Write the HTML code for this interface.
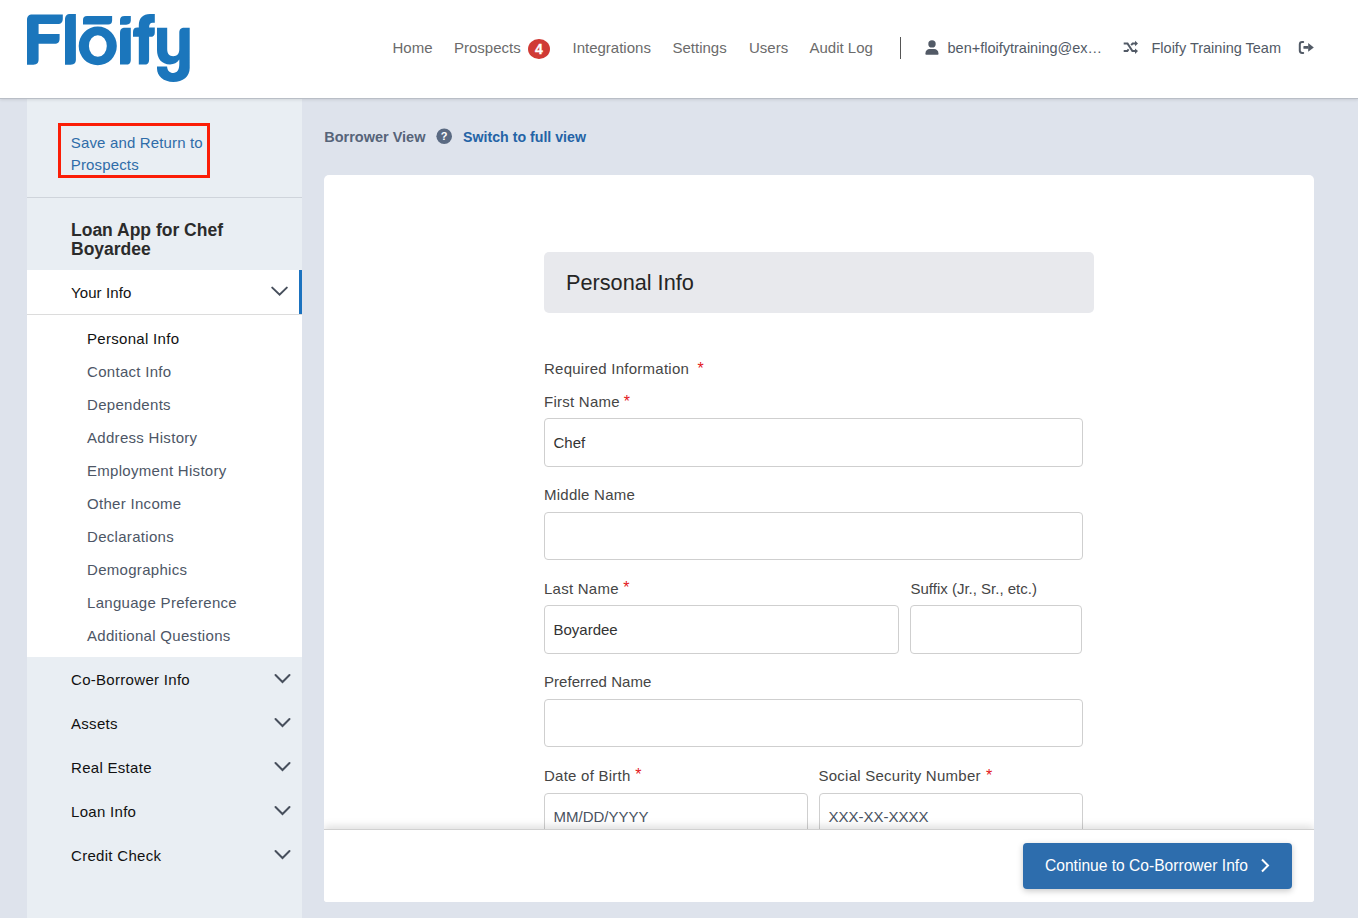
<!DOCTYPE html>
<html><head><meta charset="utf-8">
<style>
*{box-sizing:border-box;margin:0;padding:0}
html,body{width:1358px;height:918px;overflow:hidden}
body{background:#dee3ec;font-family:"Liberation Sans",sans-serif;position:relative}
.a{position:absolute;white-space:nowrap;line-height:1}
#hdr{position:absolute;left:0;top:0;width:1358px;height:99px;background:#fff;border-bottom:1px solid #b9bec6;box-shadow:0 1px 3px rgba(0,0,0,.10);z-index:2}
.nav{font-size:15px;color:#6b6b6b;top:40.4px}
.rnav{font-size:14.5px;color:#525a66;top:40.9px}
#side{position:absolute;left:27px;top:98px;width:275px;height:820px;background:#e9eef3}
.sub{font-size:15px;color:#4d5666;left:60px;letter-spacing:.3px}
.col{font-size:15px;color:#111;left:44px;letter-spacing:.3px}
#card{position:absolute;left:324px;top:175px;width:990px;height:727px;background:#fff;border-radius:5px 5px 3px 3px;overflow:hidden}
.lbl{font-size:15px;color:#454545;left:220px;letter-spacing:.25px}
.inp{position:absolute;border:1px solid #cfcfcf;border-radius:4px;background:#fff;height:48.4px}
.val{font-size:15px;color:#333}
.ast{position:absolute;color:#e3161b;font-size:16px;line-height:1}
</style></head><body>
<div id="hdr">
  <svg style="position:absolute;left:0;top:0" width="200" height="98" viewBox="0 0 200 98">
    <g fill="#1b76bc">
      <path d="M27,20 C27,16.5 28.5,14.5 32.5,14.5 L62.8,14.5 L62.8,18.5 C62.8,22 61.5,24 57.5,24 L38.6,24 L38.6,34 L59.6,34 L59.6,38.5 C59.6,42 58.3,43.8 54.3,43.8 L38.6,43.8 L38.6,59.3 C38.6,62.8 37.3,64.7 33.3,64.7 L27,64.7 Z"/>
      <path d="M65,19.5 C65,16 66.5,14 70.5,14 L75.9,14 L75.9,59.3 C75.9,62.8 74.6,64.7 70.6,64.7 L65,64.7 Z"/>
      <path d="M83,20 Q83,16 87,16 L112.1,16 L112.1,20.6 Q112.1,24.6 108.1,24.6 L83,24.6 Z"/>
      <path fill-rule="evenodd" d="M78.7,45.95 A19.05,19.35 0 1 0 116.8,45.95 A19.05,19.35 0 1 0 78.7,45.95 Z M88.9,46 A8.95,10.8 0 1 0 106.8,46 A8.95,10.8 0 1 0 88.9,46 Z"/>
      <path d="M120,20.3 C120,17.4 121.4,15.9 124.6,15.9 L130.8,15.9 L130.8,20.3 C130.8,23.2 129.4,24.7 126.2,24.7 L120,24.7 Z"/>
      <path d="M120,33 C120,29.5 121.4,27.8 125.2,27.8 L130.8,27.8 L130.8,59.4 C130.8,62.9 129.4,64.6 125.6,64.6 L120,64.6 Z"/>
      <path d="M138.8,64.6 L138.8,36.8 L133,36.8 L133,32 C133,29 134.5,27.6 137.5,27.6 L138.8,27.6 L138.8,25.5 C138.8,18 143,14.1 150,14.1 L154.8,14.1 L154.8,22.7 L152.5,22.7 Q149.1,22.7 149.1,27.6 L154.8,27.6 L154.8,32.4 C154.8,35.4 153.3,36.8 150.3,36.8 L149.1,36.8 L149.1,59.4 C149.1,62.9 147.7,64.6 143.9,64.6 Z"/>
      <path d="M157,27.8 L167.2,27.8 L167.2,49 C167.2,54 169.5,56.2 173.2,56.2 C177,56.2 179.3,54 179.3,49 L179.3,33 C179.3,29.5 180.7,27.8 184.5,27.8 L189.7,27.8 L189.7,68 C189.7,76.5 183,81.9 173.3,81.9 C163.5,81.9 157,76 157,68.5 L157,66.4 L167.1,66.4 C167.3,70.6 169.8,72.9 173.2,72.9 C177,72.9 179.3,70 179.3,64 L179.3,59.5 C177,62.8 174,64.4 170,64.4 C161.5,64.4 157,58.5 157,50 Z"/>
    </g>
  </svg>
  <div class="a nav" style="left:392.5px">Home</div>
  <div class="a nav" style="left:454px">Prospects</div>
  <div class="a" style="left:528px;top:38.8px;width:22px;height:20.4px;border-radius:50%;background:#d03a35;color:#fff;font-size:14px;font-weight:700;text-align:center;line-height:20px;-webkit-text-stroke:.3px #fff">4</div>
  <div class="a nav" style="left:572.5px">Integrations</div>
  <div class="a nav" style="left:672.5px">Settings</div>
  <div class="a nav" style="left:749px">Users</div>
  <div class="a nav" style="left:809.5px">Audit Log</div>
  <div class="a" style="left:900px;top:37px;width:1px;height:21.5px;background:#555"></div>
  <svg class="a" style="left:925px;top:40px" width="14" height="15" viewBox="0 0 14 15"><g fill="#525a66"><circle cx="7" cy="3.9" r="3.7"/><path d="M0.4,13.4 C0.4,10.6 2.5,9 4.5,9 L9.3,9 C11.3,9 13.5,10.6 13.5,13.4 L13.5,14 Q13.5,14.8 12.7,14.8 L1.2,14.8 Q0.4,14.8 0.4,14 Z"/></g></svg>
  <div class="a rnav" style="left:947.5px">ben+floifytraining@ex…</div>
  <svg class="a" style="left:1123px;top:40px" width="16" height="15" viewBox="0 0 16 15"><g fill="none" stroke="#525a66" stroke-width="2"><path d="M0.7,3.4 L4.5,3.4 L9.4,11.1 L12.8,11.1"/><path d="M0.7,11.1 L4.3,11.1 L5.6,9.2"/><path d="M8.2,5.2 L9.7,3.4 L12.8,3.4"/></g><g fill="#525a66"><path d="M12,0.8 L15,3.4 L12,6.2 Z"/><path d="M12,8.4 L15,11.1 L12,13.9 Z"/></g></svg>
  <div class="a rnav" style="left:1151.5px">Floify Training Team</div>
  <svg class="a" style="left:1298px;top:40px" width="17" height="15" viewBox="0 0 17 15"><path d="M5.2,2 L4.2,2 Q1.8,2 1.8,4.4 L1.8,10.6 Q1.8,13 4.2,13 L5.2,13" fill="none" stroke="#525a66" stroke-width="2" stroke-linecap="round"/><g fill="#525a66"><rect x="5.4" y="6.1" width="5" height="2.7" rx="0.6"/><path d="M10.2,2.9 L15.8,7.4 L10.2,11.7 Z"/></g></svg>
</div>

<div id="side">
  <div class="a" style="left:31.3px;top:25.4px;width:152px;height:55px;border:3px solid #fb1d06"></div>
  <div class="a" style="left:43.8px;top:34.2px;font-size:15px;line-height:22px;color:#2f6ca8;white-space:normal;width:150px;letter-spacing:.15px">Save and Return to Prospects</div>
  <div class="a" style="left:0;top:99px;width:275px;height:1px;background:#cfd4db"></div>
  <div class="a" style="left:44px;top:123.2px;font-size:17.5px;line-height:19px;font-weight:700;color:#2b2b2b;white-space:normal;width:200px">Loan App for Chef<br>Boyardee</div>
  <div class="a" style="left:0;top:172px;width:275px;height:387px;background:#fff"></div>
  <div class="a" style="left:272px;top:172px;width:3px;height:44px;background:#1b72bf"></div>
  <div class="a" style="left:0;top:216px;width:275px;height:1px;background:#dcdcdc"></div>
  <div class="a col" style="top:187px;letter-spacing:.1px">Your Info</div>
  <svg class="a" style="left:243px;top:186px" width="18" height="12" viewBox="0 0 18 12"><path d="M2.25,3.6 L9.6,10.6 L16.8,3.6" fill="none" stroke="#474f5c" stroke-width="2" stroke-linecap="round"/></svg>
  <div class="a sub" style="top:233.1px;color:#111">Personal Info</div>
  <div class="a sub" style="top:266.1px">Contact Info</div>
  <div class="a sub" style="top:299.1px">Dependents</div>
  <div class="a sub" style="top:332.1px">Address History</div>
  <div class="a sub" style="top:365.1px">Employment History</div>
  <div class="a sub" style="top:398.1px">Other Income</div>
  <div class="a sub" style="top:431.1px">Declarations</div>
  <div class="a sub" style="top:464.1px">Demographics</div>
  <div class="a sub" style="top:497.1px">Language Preference</div>
  <div class="a sub" style="top:530.1px">Additional Questions</div>
  <div class="a col" style="top:574.1px">Co-Borrower Info</div>
  <div class="a col" style="top:618.1px">Assets</div>
  <div class="a col" style="top:662.1px">Real Estate</div>
  <div class="a col" style="top:706.1px">Loan Info</div>
  <div class="a col" style="top:750.1px">Credit Check</div>
  <svg class="a" style="left:246px;top:573px" width="18" height="192" viewBox="0 0 18 192"><g fill="none" stroke="#474f5c" stroke-width="2" stroke-linecap="round"><path d="M2.5,4 L9.5,11 L16.5,4"/><path d="M2.5,48 L9.5,55 L16.5,48"/><path d="M2.5,92 L9.5,99 L16.5,92"/><path d="M2.5,136 L9.5,143 L16.5,136"/><path d="M2.5,180 L9.5,187 L16.5,180"/></g></svg>
</div>

<div class="a" style="left:324.2px;top:130.3px;font-size:14.5px;font-weight:700;color:#566479">Borrower View</div>
<svg class="a" style="left:436px;top:128px" width="17" height="17" viewBox="0 0 17 17"><circle cx="8.2" cy="8.2" r="7.8" fill="#5a6a82"/><text x="8.2" y="12.3" text-anchor="middle" font-family="Liberation Sans" font-weight="700" font-size="11" fill="#fff">?</text></svg>
<div class="a" style="left:463px;top:130.3px;font-size:14.2px;font-weight:700;color:#2463a6">Switch to full view</div>

<div id="card">
  <div class="a" style="left:220px;top:77px;width:550px;height:61px;background:#e8e9ed;border-radius:5px"></div>
  <div class="a" style="left:242px;top:97.3px;font-size:21.7px;color:#252525">Personal Info</div>
  <div class="a lbl" style="top:186.3px">Required Information</div>
  <div class="a lbl" style="top:219px">First Name</div>
  <div class="inp" style="left:220px;top:243.2px;width:539px"></div>
  <div class="a val" style="left:229.5px;top:260.2px">Chef</div>
  <div class="a lbl" style="top:312.2px">Middle Name</div>
  <div class="inp" style="left:220px;top:336.8px;width:539px"></div>
  <div class="a lbl" style="top:406px">Last Name</div>
  <div class="inp" style="left:220px;top:430.4px;width:355px"></div>
  <div class="a val" style="left:229.5px;top:446.9px">Boyardee</div>
  <div class="a lbl" style="left:586.5px;top:406px;letter-spacing:0">Suffix (Jr., Sr., etc.)</div>
  <div class="inp" style="left:586px;top:430.4px;width:172px"></div>
  <div class="a lbl" style="top:499.1px;letter-spacing:.05px">Preferred Name</div>
  <div class="inp" style="left:220px;top:524px;width:539px"></div>
  <div class="a lbl" style="top:593.3px">Date of Birth</div>
  <div class="inp" style="left:220px;top:617.6px;width:264px"></div>
  <div class="a val" style="left:229.5px;top:634.1px;color:#4a5261">MM/DD/YYYY</div>
  <div class="a lbl" style="left:494.5px;top:593.3px">Social Security Number</div>
  <div class="inp" style="left:495px;top:617.6px;width:264px"></div>
  <div class="a val" style="left:504.5px;top:634.1px;color:#4a5261">XXX-XX-XXXX</div>
  <div class="ast" style="left:373.4px;top:186px">*</div>
  <div class="ast" style="left:299.8px;top:219.2px">*</div>
  <div class="ast" style="left:299.2px;top:405.1px">*</div>
  <div class="ast" style="left:311.3px;top:592.3px">*</div>
  <div class="ast" style="left:662.1px;top:592.6px">*</div>
  <div class="a" style="left:0;top:654px;width:990px;height:73px;background:#fff;border-top:1px solid #d0d0d0;box-shadow:0 -3px 8px rgba(0,0,0,.13)"></div>
  <div class="a" style="left:699px;top:668px;width:269px;height:46px;background:#2d6dad;border-radius:4px;box-shadow:0 2px 6px rgba(0,0,0,.22)"></div>
  <div class="a" style="left:721px;top:683px;font-size:15.6px;color:#fff">Continue to Co-Borrower Info</div>
  <svg class="a" style="left:935px;top:682px" width="14" height="16" viewBox="0 0 14 16"><path d="M3,2.5 L9,8.5 L3,14.5" fill="none" stroke="#fff" stroke-width="2"/></svg>
</div>
</body></html>
